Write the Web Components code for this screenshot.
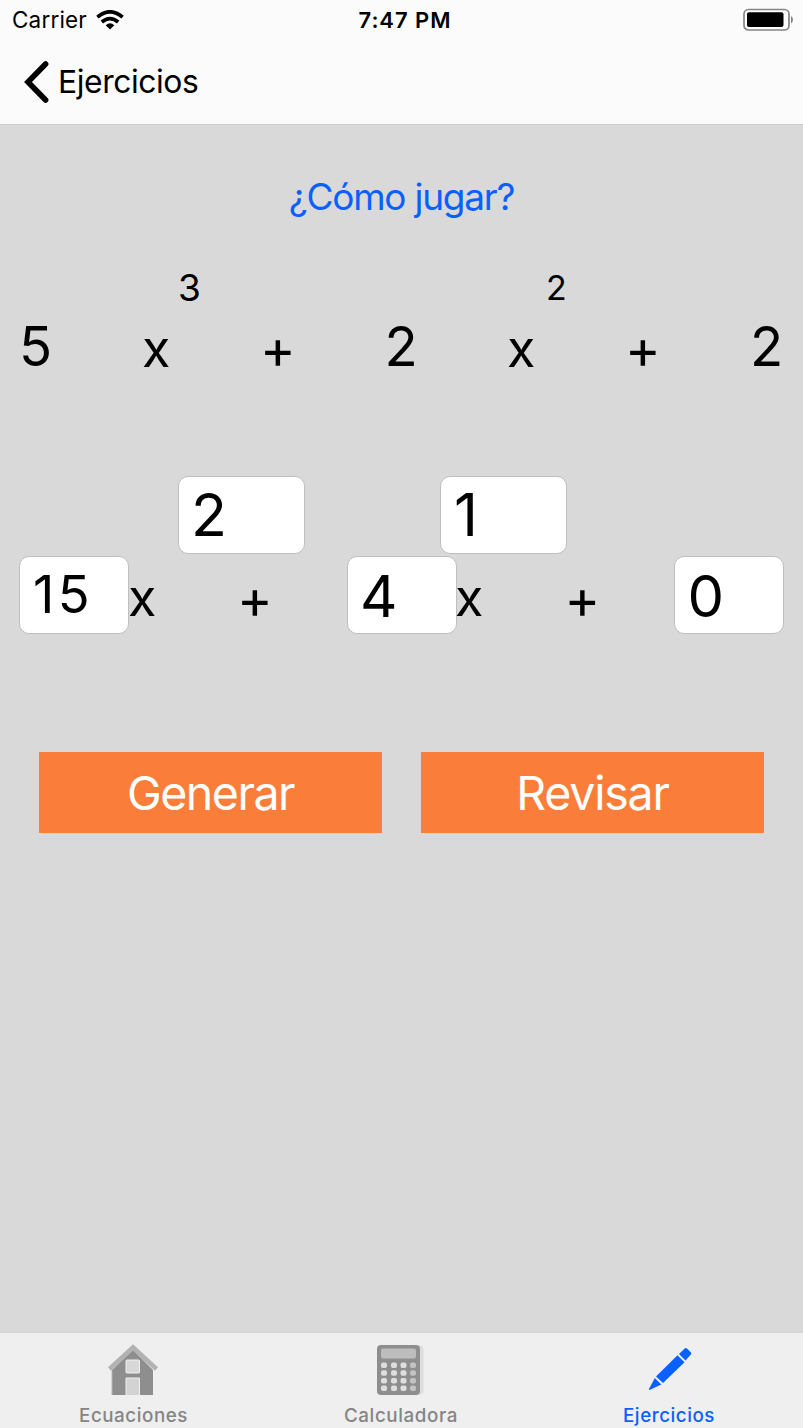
<!DOCTYPE html>
<html lang="es">
<head>
<meta charset="utf-8">
<title>Ejercicios</title>
<style>
html,body{margin:0;height:100%}
body{font-family:Inter,"Liberation Sans",sans-serif;color:#000;background:#d9d9d9;overflow:hidden}
</style>
</head>
<body>
<exercise-app></exercise-app>
<script>
const define = (name, html, setup) => {
  const t = document.createElement('template');
  t.innerHTML = html;
  customElements.define(name, class extends HTMLElement {
    connectedCallback() {
      if (this.shadowRoot) return;
      this.attachShadow({mode: 'open'}).append(t.content.cloneNode(true));
      if (setup) setup(this);
    }
  });
};

/* Single-line label: size = font size, fit = advance width, x/y = optical padding */
define('ui-text', `<style>
:host{display:block;white-space:nowrap;line-height:1;flex:none}
span{display:inline-block}
</style><span><slot></slot></span>`, el => {
  const s = el.shadowRoot.querySelector('span');
  el.style.fontSize = el.getAttribute('size') + 'px';
  if (el.hasAttribute('x')) el.style.marginLeft = el.getAttribute('x') + 'px';
  if (el.hasAttribute('y')) el.style.marginTop = el.getAttribute('y') + 'px';
  if (el.hasAttribute('fit')) {
    const n = el.textContent.length;
    const w = s.getBoundingClientRect().width;
    s.style.letterSpacing = (el.getAttribute('fit') - w) / n + 'px';
  }
});

define('status-bar', `<style>
:host{display:grid;grid-template-columns:1fr auto 1fr;align-items:center;height:40px;padding:0 9px 0 12px}
.l{display:flex;align-items:center;gap:9px}
.r{justify-self:end;display:block}
.time{font-weight:600}
svg{display:block}
</style>
<div class="l"><ui-text size="22.5" fit="75" y="1">Carrier</ui-text>
<svg width="28" height="20" viewBox="0 0 28 20"><g fill="none" stroke="#000" stroke-width="3.7"><path d="M1.4 7.2Q14-3.6 26.6 7.2"/><path d="M5.8 12Q14 5.2 22.2 12"/></g><path d="M9.7 15.2Q14 11.5 18.3 15.2L14 19.5z"/></svg></div>
<ui-text class="time" size="22" x="4" fit="93">7:47 PM</ui-text>
<svg class="r" width="51" height="24" viewBox="0 0 51 24"><rect x="1" y="1.5" width="45" height="20.5" rx="4.5" fill="#fff" stroke="#858585" stroke-width="1.7"/><rect x="4" y="4.3" width="36.5" height="14.7" rx="2"/><path d="M48 8v7.5q2-1.2 2-3.75T48 8z" fill="#858585"/></svg>`);

define('nav-bar', `<style>
:host{display:flex;align-items:center;height:84px;padding-left:24px;border-bottom:1px solid #cbcbcb}
svg{display:block}
ui-text{letter-spacing:-.4px}
</style>
<svg width="25" height="42" viewBox="0 0 25 42"><path d="M21.600 3L4 21 21.600 39" fill="none" stroke="#000" stroke-width="5.600" stroke-linecap="round" stroke-linejoin="miter"/></svg>
<ui-text size="31.8" x="9"><slot></slot></ui-text>`);

define('number-field', `<style>
:host{display:flex;align-items:center;box-sizing:border-box;background:#fff;border:1px solid #bfbfbf;border-radius:10px;height:78px;width:110px;overflow:hidden}
:host([exp]){width:127px}
</style><slot></slot>`);

define('action-button', `<style>
:host{display:flex;align-items:center;justify-content:center;background:#fa7e39;color:#fff;height:81px}
</style><slot></slot>`);

define('term-row', `<style>
:host{display:grid;align-items:center;justify-items:start;box-sizing:border-box}
</style><slot></slot>`);

define('tab-item', `<style>
:host{display:flex;flex-direction:column;align-items:center;color:#858585;font-weight:500}
:host([active]){color:#0a60ff}
.i{height:64px;display:flex;align-items:flex-start;padding-top:11px;box-sizing:border-box}
.t{height:36px;display:flex;align-items:center}
</style><div class="i"><slot name="icon"></slot></div><div class="t"><slot></slot></div>`);

define('tab-bar', `<style>
:host{display:grid;grid-template-columns:266px 268px 268px;height:95px;background:#efefef;border-top:1px solid #d2d2d2;overflow:hidden}
svg{display:block}
.house{margin-right:1px}
.pencil{margin-left:4px}
</style>
<tab-item>
<svg slot="icon" class="house" width="50" height="52" viewBox="0 0 50 52"><path d="M4 26L25 6l20 20v25H4z" fill="#8e8e8e"/><path d="M4 27v24" stroke="#b4b4b4"/><path d="M1.5 25L25 3.4l23.500 21.600" fill="none" stroke="#b2b2b2" stroke-width="4.500"/><rect x="18" y="16" width="13.500" height="13" rx="1" fill="#d8d8d8" stroke="#efefef" stroke-width="1"/><path d="M18 51V34h13.500v17" fill="#d3d3d3" stroke="#efefef"/></svg>
<ui-text size="18.800" x="1" y="2" fit="109">Ecuaciones</ui-text></tab-item>
<tab-item>
<svg slot="icon" width="48" height="52" viewBox="0 0 48 52"><path d="M42 1.500h3.500q2 1 2 4v41q0 3-2 4H42z" fill="#dedede"/><rect x="1" y="1" width="43" height="50" rx="4" fill="#8e8e8e"/><rect x="5" y="4.500" width="35" height="10" rx="2" fill="#bdbdbd"/><g fill="#dedede"><g id="r"><rect x="5" y="18.500" width="6" height="5.500" rx="2"/><rect x="15" y="18.500" width="6" height="5.500" rx="2"/><rect x="24.500" y="18.500" width="6" height="5.500" rx="2"/><rect x="34" y="18.500" width="6" height="5.500" rx="2" fill="#c2c2c2"/></g><use href="#r" y="7.700"/><use href="#r" y="15.400"/><use href="#r" y="23.100"/></g></svg>
<ui-text size="18.800" x="2" y="2" fit="114">Calculadora</ui-text></tab-item>
<tab-item active>
<svg slot="icon" class="pencil" width="44" height="52" viewBox="0 0 44 52"><g fill="#0a60ff"><path d="M31 10L37 4.300q1-.8 2 .2l4 4q.8 1-.2 2L37.500 16.500z"/><path d="M29.500 11.300l7 7L15 39 8 32.500z"/><path d="M6.800 34l6.500 6.500L1.500 46q-1 0-.5-1z"/></g></svg>
<ui-text size="18.800" x="2" y="2" fit="92">Ejercicios</ui-text></tab-item>`);

define('exercise-app', `<style>
:host{display:flex;flex-direction:column;height:1428px;background:#d9d9d9}
header{background:#fbfbfb}
main{flex:1;display:flex;flex-direction:column}
.title{display:flex;justify-content:center;height:50px;align-items:center;margin-top:46px;color:#0a60ff}
.e1{height:40px;margin-top:46px;padding-left:176px;grid-template-columns:368px 1fr}
.c1{height:78px;padding-left:19px;grid-template-columns:122px 122px 121px 122px 122px 122px 1fr}
.e2{margin-top:91px;height:78px;padding-left:178px;grid-template-columns:262px 1fr}
.c2{margin-top:2px;height:78px;padding-left:19px;grid-template-columns:109px 112px 106.500px 109px 112px 106.500px 109px}
.actions{display:grid;grid-template-columns:1fr 1fr;gap:39px;margin:118px 39px 0}
</style>
<header><status-bar></status-bar><nav-bar>Ejercicios</nav-bar></header>
<main>
<div class="title"><ui-text size="37" fit="225.500">¿Cómo jugar?</ui-text></div>
<term-row class="e1"><ui-text size="37" x="2">3</ui-text><ui-text size="34" x="2" y="1">2</ui-text></term-row>
<term-row class="c1"><ui-text size="54.500">5</ui-text><ui-text size="52" x="1" y="5">x</ui-text><ui-text size="54" x="-3" y="6">+</ui-text><ui-text size="54.500" x=".5">2</ui-text><ui-text size="52" x="1" y="5">x</ui-text><ui-text size="54" x="-3" y="6">+</ui-text><ui-text size="54.500">2</ui-text></term-row>
<term-row class="e2"><number-field exp><ui-text size="59" x="12" y="-2">2</ui-text></number-field><number-field exp><ui-text size="59" x="13" y="-2">1</ui-text></number-field></term-row>
<term-row class="c2"><number-field><ui-text size="52.500" x="13" y="-2" fit="60">15</ui-text></number-field><ui-text size="52" y="6">x</ui-text><ui-text size="54" x="-3" y="8">+</ui-text><number-field><ui-text size="58" x="12.500" y="1">4</ui-text></number-field><ui-text size="52" x="-.5" y="6">x</ui-text><ui-text size="54" x="-3" y="8">+</ui-text><number-field><ui-text size="58" x="12.500" y="1">0</ui-text></number-field></term-row>
<div class="actions"><action-button><ui-text size="46.500" y="1" fit="167">Generar</ui-text></action-button><action-button><ui-text size="46.500" y="1" fit="152.500">Revisar</ui-text></action-button></div>
</main>
<tab-bar></tab-bar>`);
</script>
</body>
</html>
